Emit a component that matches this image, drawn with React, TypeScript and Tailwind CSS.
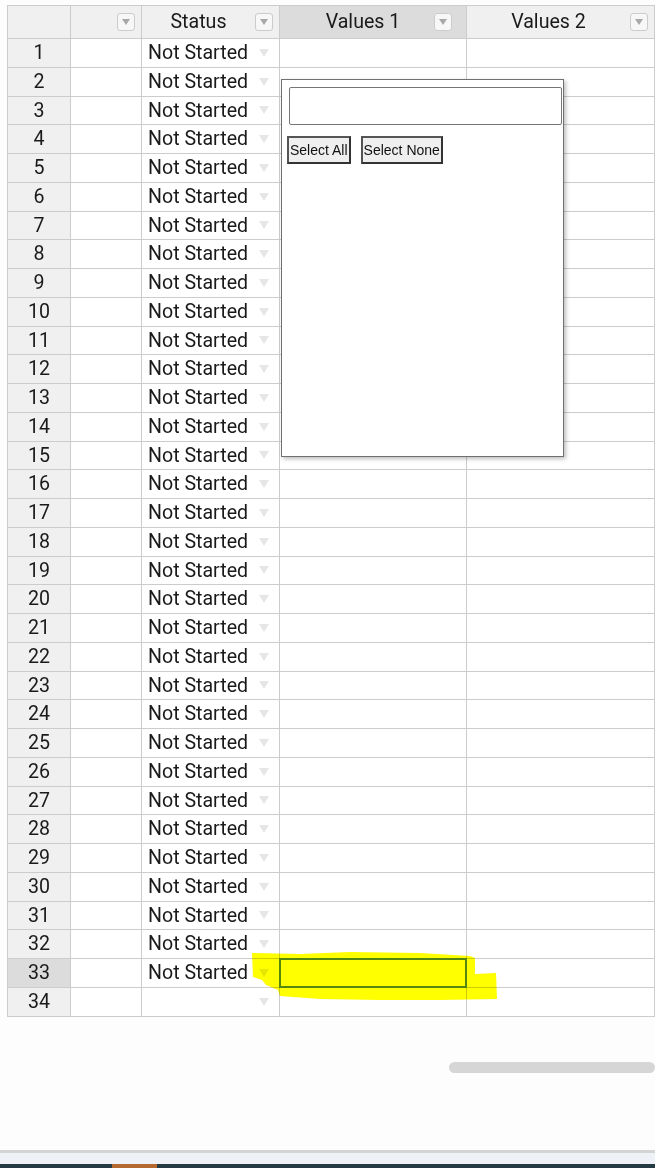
import React from 'react';

const rows = Array.from({ length: 34 }, (_, i) => i + 1);

const FilterButton = () => (
  <div className="w-[18px] h-[18px] border border-[#cccccc] rounded-[3px] bg-[#f7f7f7] flex items-center justify-center">
    <div className="w-0 h-0 border-l-[4px] border-r-[4px] border-t-[6px] border-l-transparent border-r-transparent border-t-[#a8a8a8]" />
  </div>
);

const CellArrow = () => (
  <div className="w-0 h-0 border-l-[5px] border-r-[5px] border-t-[8px] border-l-transparent border-r-transparent border-t-[#e6e6e6]" />
);

export default function App() {
  return (
    <div className="relative w-[655px] h-[1168px] overflow-hidden bg-[#fdfdfd] font-['Roboto',sans-serif] text-[19.6px] text-[#1a1a1a]">
      {/* Grid area */}
      <div className="h-[1074px] pt-[5px] pl-[7px] flex flex-col shadow-[0_1px_2px_rgba(0,0,0,0.08)]">
        <div className="border-t border-l border-[#cccccc] w-max">
          {/* Header row */}
          <div className="flex h-[33px]">
            <div className="w-[63px] bg-[#f0f0f0] border-r border-b border-[#cccccc]" />
            <div className="w-[71px] bg-[#f0f0f0] border-r border-b border-[#cccccc] flex items-center justify-end pr-[6px]">
              <FilterButton />
            </div>
            <div className="w-[138px] bg-[#f0f0f0] border-r border-b border-[#cccccc] flex items-center pr-[6px]">
              <span className="flex-1 text-center">Status</span>
              <FilterButton />
            </div>
            <div className="w-[187px] bg-[#dcdcdc] border-r border-b border-[#cccccc] flex items-center pl-[12px] pr-[14px]">
              <span className="flex-1 text-center">Values 1</span>
              <FilterButton />
            </div>
            <div className="w-[188px] bg-[#f0f0f0] border-r border-b border-[#cccccc] flex items-center pr-[6px]">
              <span className="flex-1 text-center">Values 2</span>
              <FilterButton />
            </div>
          </div>

          {rows.map((n) => (
            <div key={n} className="flex h-[28.76px]">
              <div
                className={`w-[63px] border-r border-b border-[#cccccc] flex items-center justify-center ${n === 33 ? 'bg-[#dcdcdc]' : 'bg-[#f0f0f0]'}`}
              >
                {n}
              </div>
              <div className="w-[71px] bg-white border-r border-b border-[#cccccc]" />
              <div className="w-[138px] bg-white border-r border-b border-[#cccccc] flex items-center pl-[6px] pr-[10px]">
                <span className="flex-1 whitespace-nowrap">{n < 34 ? 'Not Started' : ''}</span>
                <CellArrow />
              </div>
              {n === 33 ? (
                <div className="relative z-10 w-[187px] border-r border-b border-[#cccccc] bg-white">
                  <div className="absolute -left-px -top-px w-[188px] h-[30px] border-2 border-[#55870e] bg-[#ffff00]" />
                </div>
              ) : (
                <div className="w-[187px] bg-white border-r border-b border-[#cccccc]" />
              )}
              <div className="w-[188px] bg-white border-r border-b border-[#cccccc]" />
            </div>
          ))}
        </div>

        <div className="mt-auto mb-[1px] flex">
          <div className="ml-[442px] w-[220px] h-[11px] rounded-full bg-[#d6d6d6]" />
        </div>
      </div>

      {/* Highlighter stroke */}
      <svg className="absolute left-[250px] top-[950px] mix-blend-multiply" width="252" height="54" viewBox="0 0 252 54">
        <path
          d="M2,3 L50,4 L100,2 L170,3 L220,6 L225,8 L225,24 L246,23 L247,49 L190,50 L130,50 L70,49 L30,46 L28,40 L16,35 L12,30 L3,27 Z"
          fill="#ffff00"
        />
      </svg>

      {/* Filter popup */}
      <div className="absolute left-[281px] top-[79px] w-[283px] h-[378px] bg-white border border-[#707070] shadow-[2px_2px_4px_rgba(0,0,0,0.25)] pl-[5px] pt-[7px] font-['Liberation_Sans',Arial,sans-serif]">
        <div className="ml-[2px] w-[273px] h-[38px] border border-[#767676] rounded-[2px] bg-white" />
        <div className="flex gap-[10px] mt-[11px]">
          <button className="h-[28px] px-[1px] bg-[#efefef] border-2 border-[#333] border-t-[#555] border-l-[#555] text-[14px] text-[#111]">
            Select All
          </button>
          <button className="h-[28px] px-[1px] bg-[#efefef] border-2 border-[#333] border-t-[#555] border-l-[#555] text-[14px] text-[#111]">
            Select None
          </button>
        </div>
      </div>

      {/* Bottom area */}
      <div className="h-[76px] bg-[#fdfdfd]" />
      <div className="h-[3px] bg-[#d4d4d4]" />
      <div className="h-[11px] bg-[#eef2f6]" />
      <div className="h-[4px] bg-[#263a44] flex">
        <div className="ml-[112px] w-[45px] bg-[#b5692f]" />
      </div>
    </div>
  );
}
